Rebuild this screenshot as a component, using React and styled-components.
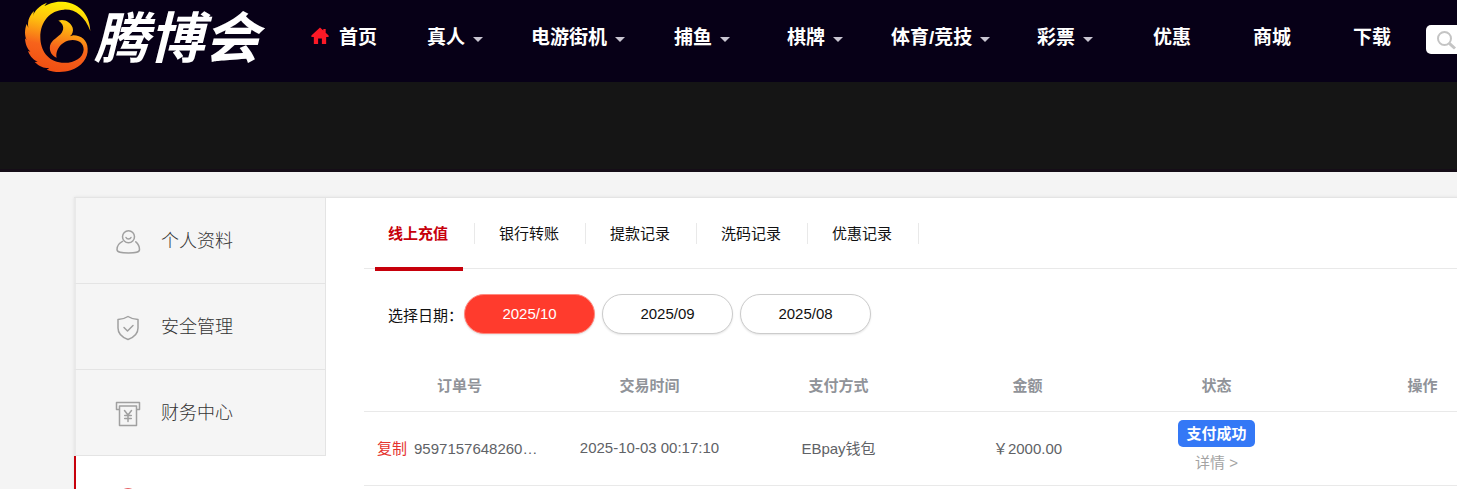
import React from "react";
import styled, { createGlobalStyle } from "styled-components";

const GlobalStyle = createGlobalStyle`
  *, *::before, *::after { box-sizing: border-box; }
  body {
    margin: 0;
    background: #f4f4f4;
    font-family: "Liberation Sans", "Noto Sans CJK SC", sans-serif;
    font-size: 15px;
    color: #111;
  }
  ul { list-style: none; margin: 0; padding: 0; }
  a { color: inherit; text-decoration: none; }
  button { font: inherit; cursor: pointer; }
`;

const Page = styled.div`
  height: 100vh;
  overflow: hidden;
`;

const Header = styled.header`
  display: flex;
  align-items: flex-start;
  height: 82px;
  padding-left: 24px;
  background: #070017;
`;

const Logo = styled.a`
  display: flex;
  flex: none;
  width: 287px;
  height: 76px;
  color: #fff;
`;

const LogoText = styled.span`
  font-size: 55px;
  font-weight: 700;
  font-style: italic;
  line-height: 78px;
  white-space: nowrap;
`;

const NavList = styled.ul`
  display: grid;
  grid-template-columns: 116px 104px 143px 113px 104px 146px 116px 100px 100px 73px;
  line-height: 28px;
  padding-top: 24px;
`;

const NavLink = styled.a`
  display: flex;
  align-items: center;
  color: #fff;
  font-size: 19px;
  font-weight: 700;
  white-space: nowrap;

  svg { margin: 0 10px 4px 0; }
`;

const Caret = styled.span`
  margin: 2px 0 0 8px;
  border: 5px solid transparent;
  border-top-color: #c9c6d2;
  border-bottom: 0;
`;

const Search = styled.label`
  display: flex;
  flex: none;
  align-items: center;
  width: 180px;
  height: 29px;
  margin-top: 25px;
  padding-left: 11px;
  border-radius: 5px;
  background: #fff;
`;

const SearchInput = styled.input`
  flex: 1;
  min-width: 0;
  border: 0;
  outline: 0;
  background: transparent;
`;

const Banner = styled.div`
  height: 90px;
  background: #151515;
  border-bottom: 3px solid #150d17;
`;

const Panel = styled.div`
  display: flex;
  min-width: 1500px;
  margin: 25px 0 0 74px;
  border-top: 1px solid #e4e4e4;
  background: #fff;
  box-shadow: 0 0 3px rgba(0, 0, 0, 0.08);
`;

const SideNav = styled.nav`
  flex: none;
  width: 252px;
`;

const SideLink = styled.a`
  display: flex;
  align-items: center;
  height: 86px;
  padding: 0 0 4px 39px;
  border-left: 2px solid ${(p) => (p.$active ? "#c7000b" : "#e9e9e9")};
  border-right: 1px solid ${(p) => (p.$active ? "#fff" : "#e4e4e4")};
  border-bottom: 1px solid #e4e4e4;
  background: ${(p) => (p.$active ? "#fff" : "#f5f5f5")};
  color: #333;
  font-size: 18px;
  font-weight: 300;

  svg { margin: 6px 20px 0 0; }
`;

const Main = styled.main`
  flex: 1;
  padding-left: 38px;
`;

const Tabs = styled.div`
  display: flex;
  height: 71px;
  padding-top: 25px;
  border-bottom: 1px solid #e9e9e9;
`;

const Tab = styled.button`
  position: relative;
  width: 111px;
  height: 21px;
  padding: 0 2px 0 0;
  border: 0;
  border-right: 1px solid #e9e9e9;
  background: none;
  line-height: 21px;
  color: ${(p) => (p.$active ? "#c7000b" : "#111")};
  font-weight: ${(p) => (p.$active ? 700 : 400)};

  &::after {
    content: "";
    position: absolute;
    top: 44px;
    left: 11px;
    width: 88px;
    height: 4px;
    background: ${(p) => (p.$active ? "#c7000b" : "transparent")};
  }
`;

const DateRow = styled.div`
  display: flex;
  align-items: center;
  gap: 7px;
  padding: 25px 0 0 24px;
`;

const DateLabel = styled.span`
  width: 69px;
  white-space: nowrap;
`;

const DateButton = styled.button`
  width: 131px;
  height: 40px;
  padding: 0 0 2px;
  border: 1px solid ${(p) => (p.$active ? "#ff8a80" : "#ccc")};
  border-radius: 20px;
  background: ${(p) => (p.$active ? "#ff3b2d" : "#fff")};
  color: ${(p) => (p.$active ? "#fff" : "#111")};
  box-shadow: 0 1px 2px rgba(0, 0, 0, 0.1);
`;

const Table = styled.table`
  width: 1170px;
  margin-top: 25px;
  border-collapse: collapse;
  table-layout: fixed;
  color: #606266;
  text-align: center;
`;

const Th = styled.th`
  width: ${(p) => p.$width}px;
  height: 52px;
  padding: 0;
  border-bottom: 1px solid #e9e9e9;
  color: #909399;
`;

const Td = styled.td`
  height: 74px;
  padding: 0 0 2px;
  border-bottom: 1px solid #e9e9e9;
  white-space: nowrap;
`;

const OrderCell = styled.div`
  display: flex;
  align-items: baseline;
  gap: 7px;
  padding-left: 13px;
`;

const CopyButton = styled.button`
  padding: 0;
  border: 0;
  background: none;
  color: #e5342f;
`;

const StatusCell = styled.div`
  display: flex;
  flex-direction: column;
  align-items: center;
  gap: 4px;
`;

const StatusTag = styled.span`
  padding: 0 8px;
  border-radius: 5px;
  background: #3478f6;
  color: #fff;
  font-weight: 700;
  line-height: 27px;
`;

const DetailLink = styled.a`
  color: #a3a3a3;
  line-height: 24px;
`;

const LogoMark = () => (
  <svg width="70" height="76" viewBox="12 0 210 228" aria-hidden="true">
    <defs>
      <linearGradient id="flame" x1="0.6" y1="0" x2="0.4" y2="1">
        <stop offset="0" stopColor="#fff200" />
        <stop offset="0.3" stopColor="#ffc20e" />
        <stop offset="0.65" stopColor="#f7631b" />
        <stop offset="1" stopColor="#f04e12" />
      </linearGradient>
    </defs>
    <path
      fill="url(#flame)"
      d="M211 93C210 55 188 8 126 5C102 4 84 12 73 18L81 8C58 16 42 34 39 48L42 33C23 52 23 70 25 83L20 72C13 91 14 108 20 120L15 115C16 135 23 148 31 155L24 153C31 171 42 181 53 185L44 186C60 202 76 205 88 204L80 209C102 218 130 218 152 211C184 200 205 174 203 146C202 121 184 106 160 106L150 109C157 103 161 93 158 83C151 67 135 56 115 62C130 70 134 85 125 98C115 112 95 118 90 137C87 155 97 168 110 173C105 150 125 121 158 120C178 120 191 131 191 149C189 175 160 191 125 188C84 185 61 151 61 111C61 64 91 31 132 29C166 27 194 49 211 93Z"
    />
  </svg>
);

const HomeIcon = () => (
  <svg width="18" height="18" viewBox="0 0 19 19" fill="#fb1926" aria-hidden="true">
    <path d="M9.5 0.5L13 3.6V2h2.500v4L18.600 9v1.500H16v7.500h-4.500v-5.800h-4v5.800H3V10.500H0.400V9Z" />
  </svg>
);

const SearchIcon = () => (
  <svg width="20" height="20" viewBox="0 0 20 20" fill="none" stroke="#c4c4c4" aria-hidden="true">
    <circle cx="7.5" cy="8.5" r="6.5" strokeWidth="2" />
    <path d="M12.3 13.3L18 18.500" strokeWidth="3" />
  </svg>
);

const SideIcon = ({ children, color = "#a0a0a0" }) => (
  <svg width="26" height="26" viewBox="0 0 26 26" fill="none" stroke={color} strokeWidth="1.5" strokeLinecap="round" strokeLinejoin="round" aria-hidden="true">
    {children}
  </svg>
);

const ProfileIcon = () => (
  <SideIcon>
    <circle cx="13.5" cy="7.7" r="6" />
    <path d="M11 8.500c1 2 4 2 5 0M7.500 12.300C4 14 2 17.500 2 20.500c0 3 4 3.500 11.500 3.500s11-.5 11-3.500c0-3-1-5.500-3.700-7.700" />
  </SideIcon>
);

const ShieldIcon = () => (
  <SideIcon>
    <path d="M13 1.500C10 3.500 6.500 4.300 3 4.500V13c0 6 4.500 9.500 10 11.500C18.500 22.500 23 19 23 13V4.500C19.500 4.300 16 3.500 13 1.500Z" />
    <path d="M9 12.500l3.500 3.500 5.500-5.500" />
  </SideIcon>
);

const FinanceIcon = () => (
  <SideIcon>
    <path d="M4.500 8.500H1.500V1.500h23v7h-3M4.500 5h17v19.500h-17Z" />
    <path d="M9.500 9.500l3.500 4.500 3.500-4.500M13 14v6.500M9.700 14.500h6.600M9.700 17.500h6.600" />
  </SideIcon>
);

const RecordIcon = () => (
  <SideIcon color="#dc2b2f">
    <circle cx="13" cy="13" r="11" />
    <path d="M13 7v6.500l4.500 2.500" />
  </SideIcon>
);

const navItems = [
  { label: "首页", home: true },
  { label: "真人", menu: true },
  { label: "电游街机", menu: true },
  { label: "捕鱼", menu: true },
  { label: "棋牌", menu: true },
  { label: "体育/竞技", menu: true },
  { label: "彩票", menu: true },
  { label: "优惠" },
  { label: "商城" },
  { label: "下载" },
];

const tabs = ["线上充值", "银行转账", "提款记录", "洗码记录", "优惠记录"];
const months = ["2025/10", "2025/09", "2025/08"];
const columns = [
  ["订单号", 191],
  ["交易时间", 189],
  ["支付方式", 189],
  ["金额", 189],
  ["状态", 189],
  ["操作", 223],
];

export default function App() {
  return (
    <Page>
      <GlobalStyle />
      <Header>
        <Logo href="#">
          <LogoMark />
          <LogoText>腾博会</LogoText>
        </Logo>
        <nav>
          <NavList>
            {navItems.map((item) => (
              <li key={item.label}>
                <NavLink href="#">
                  {item.home && <HomeIcon />}
                  {item.label}
                  {item.menu && <Caret />}
                </NavLink>
              </li>
            ))}
          </NavList>
        </nav>
        <Search>
          <SearchIcon />
          <SearchInput type="search" aria-label="搜索" />
        </Search>
      </Header>
      <Banner />
      <Panel>
        <SideNav>
          <SideLink href="#"><ProfileIcon />个人资料</SideLink>
          <SideLink href="#"><ShieldIcon />安全管理</SideLink>
          <SideLink href="#"><FinanceIcon />财务中心</SideLink>
          <SideLink href="#" $active aria-label="交易记录"><RecordIcon /></SideLink>
        </SideNav>
        <Main>
          <Tabs>
            {tabs.map((label, i) => (
              <Tab key={label} type="button" $active={i === 0}>{label}</Tab>
            ))}
          </Tabs>
          <DateRow>
            <DateLabel>选择日期：</DateLabel>
            {months.map((month, i) => (
              <DateButton key={month} type="button" $active={i === 0}>{month}</DateButton>
            ))}
          </DateRow>
          <Table>
            <thead>
              <tr>
                {columns.map(([label, width]) => (
                  <Th key={label} scope="col" $width={width}>{label}</Th>
                ))}
              </tr>
            </thead>
            <tbody>
              <tr>
                <Td>
                  <OrderCell>
                    <CopyButton type="button">复制</CopyButton>
                    <span>9597157648260…</span>
                  </OrderCell>
                </Td>
                <Td>2025-10-03 00:17:10</Td>
                <Td>EBpay钱包</Td>
                <Td>￥2000.00</Td>
                <Td>
                  <StatusCell>
                    <StatusTag>支付成功</StatusTag>
                    <DetailLink href="#">详情 &gt;</DetailLink>
                  </StatusCell>
                </Td>
                <Td />
              </tr>
            </tbody>
          </Table>
        </Main>
      </Panel>
    </Page>
  );
}
